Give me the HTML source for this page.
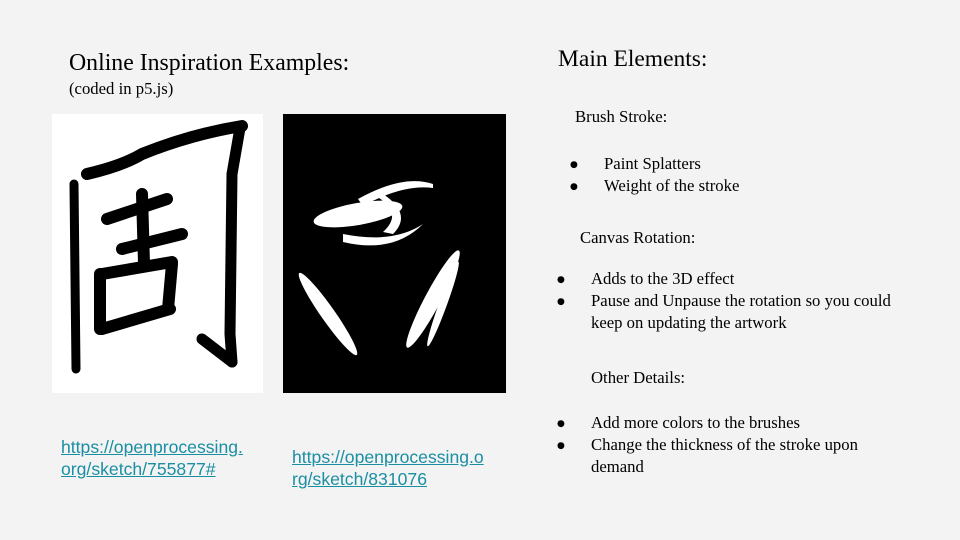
<!DOCTYPE html>
<html><head><meta charset="utf-8"><style>
body{margin:0;width:960px;height:540px;background:#f3f3f3;position:relative;overflow:hidden;font-family:"Liberation Serif",serif;color:#000}
.t{position:absolute;white-space:nowrap}
.a{position:absolute;font-family:"Liberation Sans",sans-serif;font-size:17.6px;color:#1a8fa3;text-decoration:underline;line-height:22px}
ul{margin:0;padding:0;list-style:none}
.b{position:absolute;font-size:16.7px;line-height:22px;white-space:nowrap}
.b li{position:relative}
.b li:before{content:"●";position:absolute;left:-34px;top:1px;font-size:9px;font-family:"DejaVu Sans",sans-serif}
</style></head><body>
<div class="t" style="left:69px;top:50px;font-size:23.8px">Online Inspiration Examples:</div>
<div class="t" style="left:69px;top:79px;font-size:16.7px">(coded in p5.js)</div>
<div class="t" style="left:558px;top:46px;font-size:23.5px">Main Elements:</div>
<div class="t" style="left:575px;top:107px;font-size:16.7px">Brush Stroke:</div>
<ul class="b" style="left:604px;top:153px"><li>Paint Splatters</li><li>Weight of the stroke</li></ul>
<div class="t" style="left:580px;top:228px;font-size:16.7px">Canvas Rotation:</div>
<ul class="b" style="left:591px;top:268px"><li>Adds to the 3D effect</li><li>Pause and Unpause the rotation so you could<br>keep on updating the artwork</li></ul>
<div class="t" style="left:591px;top:368px;font-size:16.7px">Other Details:</div>
<ul class="b" style="left:591px;top:412px"><li>Add more colors to the brushes</li><li>Change the thickness of the stroke upon<br>demand</li></ul>
<div class="a" style="left:61px;top:436px">https://openprocessing.<br>org/sketch/755877#</div>
<div class="a" style="left:292px;top:446px">https://openprocessing.o<br>rg/sketch/831076</div>
<svg style="position:absolute;left:52px;top:114px" width="211" height="279" viewBox="0 0 211 279">
<rect width="211" height="279" fill="#fff"/>
<g stroke="#000" stroke-linecap="round" fill="none">
<path d="M22 70 L24 255" stroke-width="9"/>
<path d="M35 60 Q70 52 90 40 Q140 20 190 12" stroke-width="12"/>
<path d="M188 14 L180 60 L178 220 L180 248" stroke-width="11"/>
<path d="M150 225 L180 248" stroke-width="11"/>
<path d="M55 105 L115 85" stroke-width="12"/>
<path d="M70 135 L130 120" stroke-width="12"/>
<path d="M90 80 L92 150" stroke-width="12"/>
<path d="M50 160 L120 148" stroke-width="12"/>
<path d="M48 160 L48 215" stroke-width="12"/>
<path d="M120 150 L116 195" stroke-width="12"/>
<path d="M50 215 L118 195" stroke-width="12"/>
</g></svg>
<svg style="position:absolute;left:283px;top:114px" width="223" height="279" viewBox="0 0 223 279">
<rect width="223" height="279" fill="#000"/>
<g fill="#fff">
<ellipse cx="75" cy="100" rx="45" ry="11" transform="rotate(-10 75 100)"/>
<path d="M75 85 Q120 60 150 70 L150 74 Q120 70 80 92Z"/>
<path d="M100 80 Q130 100 110 120 L100 118 Q120 100 96 84Z"/>
<path d="M60 120 Q110 130 140 110 Q110 140 60 128Z"/>
<ellipse cx="45" cy="200" rx="50" ry="7" transform="rotate(55 45 200)"/>
<ellipse cx="150" cy="185" rx="55" ry="8" transform="rotate(-62 150 185)"/>
<ellipse cx="160" cy="190" rx="45" ry="4" transform="rotate(-70 160 190)"/>
</g></svg>
</body></html>
